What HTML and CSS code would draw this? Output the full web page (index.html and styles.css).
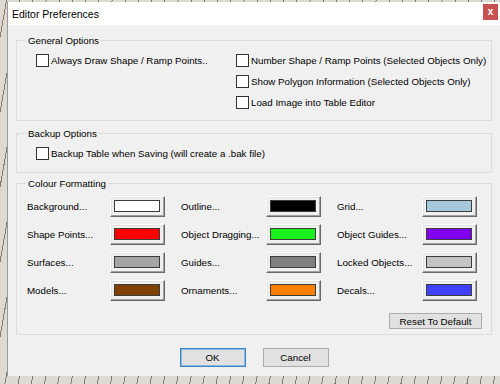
FILE: index.html
```html
<!DOCTYPE html>
<html lang="en">
<head>
  <meta charset="UTF-8">
  <title>Editor Preferences</title>
  <link rel="stylesheet" href="styles.css">
</head>
<body>
  <div class="dialog">
    <div class="titlebar">
      <span class="title">Editor Preferences</span>
      <button type="button" class="close">x</button>
    </div>

    <div class="content">
      <!-- general -->
      <fieldset class="group general">
        <legend>General Options</legend>
        <div class="opts">
          <div class="col">
            <label class="check"><span class="box"></span>Always Draw Shape / Ramp Points..</label>
          </div>
          <div class="col">
            <label class="check"><span class="box"></span>Number Shape / Ramp Points (Selected Objects Only)</label>
            <label class="check"><span class="box"></span>Show Polygon Information (Selected Objects Only)</label>
            <label class="check"><span class="box"></span>Load Image into Table Editor</label>
          </div>
        </div>
      </fieldset>

      <!-- backup -->
      <fieldset class="group backup">
        <legend>Backup Options</legend>
        <label class="check"><span class="box"></span>Backup Table when Saving (will create a .bak file)</label>
      </fieldset>

      <!-- colours -->
      <fieldset class="group colours">
        <legend>Colour Formatting</legend>
        <div class="colour-grid">
          <div class="item"><span>Background...</span><button type="button" class="swatch-btn"><span class="swatch c-white"></span></button></div>
          <div class="item"><span>Outline...</span><button type="button" class="swatch-btn"><span class="swatch c-black"></span></button></div>
          <div class="item"><span>Grid...</span><button type="button" class="swatch-btn"><span class="swatch c-grid"></span></button></div>

          <div class="item"><span>Shape Points...</span><button type="button" class="swatch-btn"><span class="swatch c-red"></span></button></div>
          <div class="item"><span>Object Dragging...</span><button type="button" class="swatch-btn"><span class="swatch c-green"></span></button></div>
          <div class="item"><span>Object Guides...</span><button type="button" class="swatch-btn"><span class="swatch c-purple"></span></button></div>

          <div class="item"><span>Surfaces...</span><button type="button" class="swatch-btn"><span class="swatch c-silver"></span></button></div>
          <div class="item"><span>Guides...</span><button type="button" class="swatch-btn"><span class="swatch c-grey"></span></button></div>
          <div class="item"><span>Locked Objects...</span><button type="button" class="swatch-btn"><span class="swatch c-light"></span></button></div>

          <div class="item"><span>Models...</span><button type="button" class="swatch-btn"><span class="swatch c-brown"></span></button></div>
          <div class="item"><span>Ornaments...</span><button type="button" class="swatch-btn"><span class="swatch c-orange"></span></button></div>
          <div class="item"><span>Decals...</span><button type="button" class="swatch-btn"><span class="swatch c-blue"></span></button></div>
        </div>
        <div class="reset-row">
          <button type="button" class="btn btn-reset">Reset To Default</button>
        </div>
      </fieldset>

      <div class="actions">
        <button type="button" class="btn btn-ok">OK</button>
        <button type="button" class="btn">Cancel</button>
      </div>
    </div>
  </div>
</body>
</html>
```

FILE: styles.css
```css
html,
body {
  margin: 0;
  padding: 0;
}

body {
  width: 500px;
  height: 384px;
  overflow: hidden;
  font-family: "Liberation Sans", Arial, sans-serif;
  font-size: 9.75px;
  color: #000;
  background-color: #dedad3;
  background-image: repeating-linear-gradient(100deg, transparent 0 6px, rgba(40, 30, 20, 0.5) 6px 7px, transparent 7px 13px);
}

button {
  font: inherit;
  color: inherit;
  cursor: pointer;
}

/* 창 */
.dialog {
  margin: 2px 0 0 7px;
  width: 493px;
  height: 374px;
  background: #f0f0f0;
  border-left: 1px solid #9a9a9a;
  box-sizing: border-box;
}

.titlebar {
  height: 23px;
  background: #fff;
  display: flex;
  align-items: center;
  justify-content: space-between;
  padding-left: 4px;
}

.title {
  font-size: 10.5px;
  padding-top: 1px;
}

.close {
  align-self: flex-start;
  margin-top: 2px;
  margin-right: 2px;
  width: 15px;
  height: 16px;
  border: none;
  padding: 0 0 2px;
  background: #c75050;
  color: #fff;
  font-size: 10px;
  font-weight: bold;
}

.content {
  padding: 9px 8px 0 8px;
}

/* 그룹 박스 */
.group {
  margin: 0;
  padding: 0 9px 0 19px;
  border: 1px solid #dcdcdc;
  min-width: 0;
}

.group legend {
  margin-left: -10px;
  padding: 0 2px;
  line-height: 13px;
  height: 13px;
}

.general {
  padding-top: 3px;
  padding-bottom: 7px;
}

.opts {
  display: grid;
  grid-template-columns: 200px 1fr;
}

.col {
  display: flex;
  flex-direction: column;
}

.check {
  display: flex;
  align-items: center;
  height: 21px;
  white-space: nowrap;
}

.box {
  width: 13px;
  height: 13px;
  box-sizing: border-box;
  border: 1px solid #333;
  background: #fff;
  margin-right: 2px;
  flex: none;
}

.backup {
  margin-top: 6px;
  padding-top: 3px;
  padding-bottom: 8px;
}

.colours {
  margin-top: 4px;
  padding: 6px 9px 5px 10px;
}

.colours legend {
  margin-left: -1px;
}

.colour-grid {
  display: grid;
  grid-template-columns: 138px 140px 140px;
  column-gap: 16px;
  row-gap: 7px;
}

.item {
  display: flex;
  align-items: center;
  justify-content: space-between;
  height: 21px;
}

/* 색상 버튼 */
.swatch-btn {
  width: 55px;
  height: 21px;
  box-sizing: border-box;
  padding: 3px 4px 4px 3px;
  background: #f0f0f0;
  border: 1px solid;
  border-color: #fff #696969 #696969 #fff;
  box-shadow: inset -1px -1px 0 #a0a0a0, inset 1px 1px 0 #e3e3e3;
  display: flex;
}

.swatch {
  flex: 1;
  border: 1px solid #3c3c3c;
}

.c-white { background: #fff; }
.c-black { background: #000; }
.c-grid { background: #a6c8dc; }
.c-red { background: #ff0000; }
.c-green { background: #1cf01c; }
.c-purple { background: #8000f0; }
.c-silver { background: #a4a4a4; }
.c-grey { background: #808080; }
.c-light { background: #c4c4c4; }
.c-brown { background: #804000; }
.c-orange { background: #ff8000; }
.c-blue { background: #4040ff; }

.reset-row {
  display: flex;
  justify-content: flex-end;
  margin-top: 12px;
}

.btn {
  background: #e1e1e1;
  border: 1px solid #adadad;
  padding: 0;
}

.btn-reset {
  width: 93px;
  height: 16px;
}

.actions {
  display: flex;
  justify-content: center;
  gap: 17px;
  margin-top: 13px;
}

.actions .btn {
  width: 66px;
  height: 19px;
}

.btn-ok {
  border-color: #3c86c6;
  box-shadow: inset 0 0 0 1px #8ab8e0;
}
```
